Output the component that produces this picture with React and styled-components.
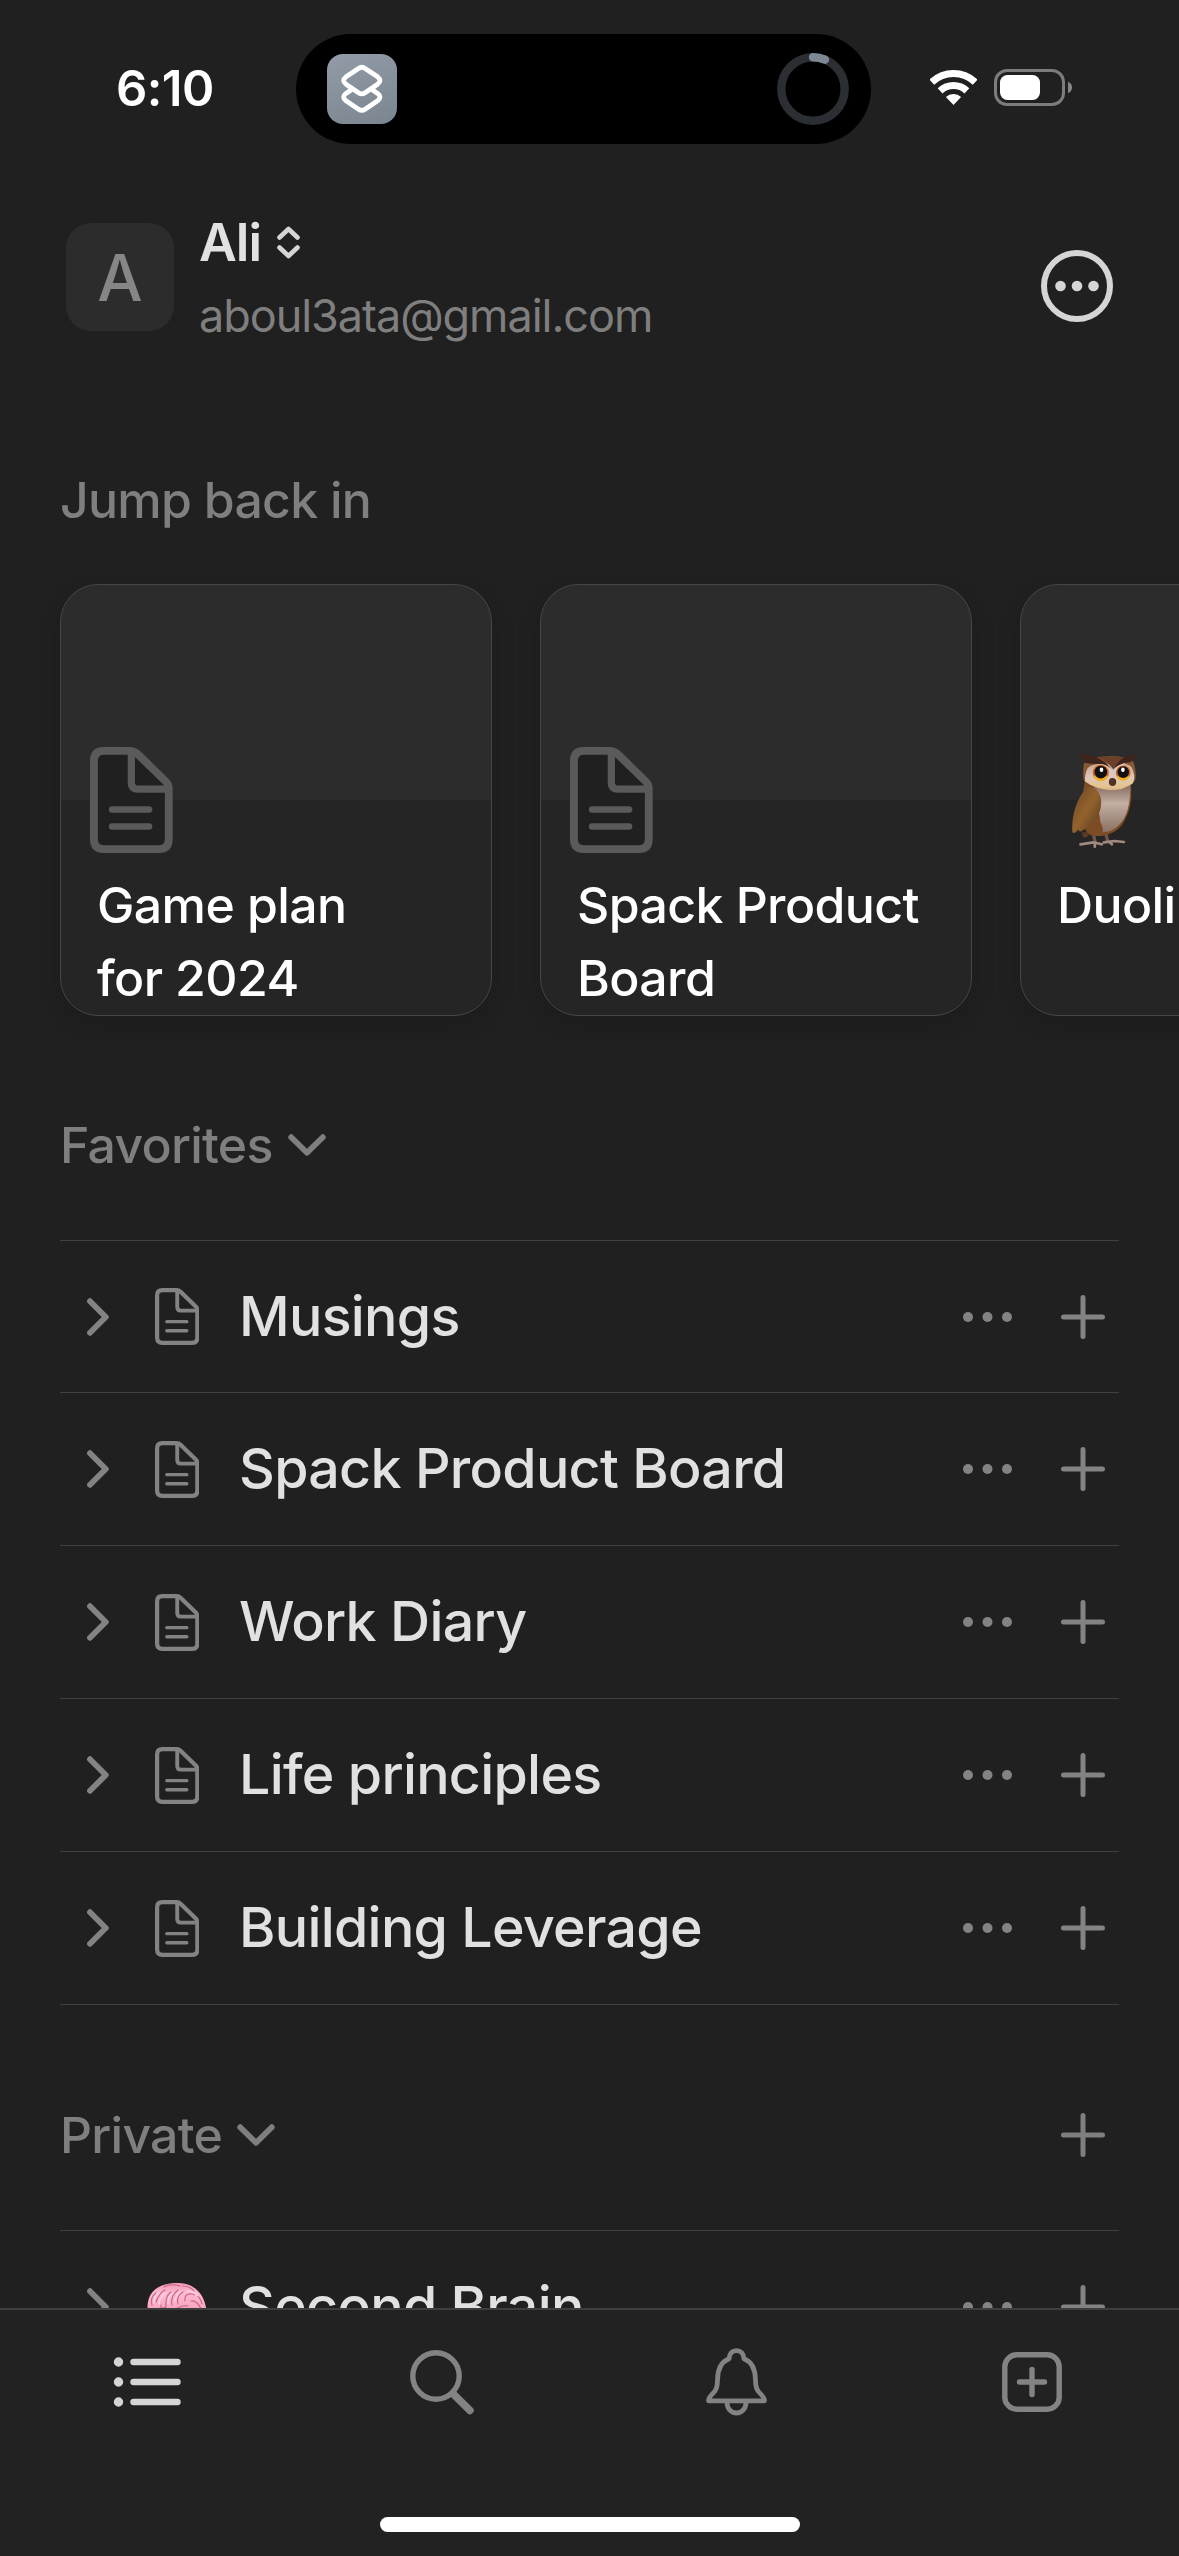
import React from 'react';
import styled, {createGlobalStyle} from 'styled-components';

const GlobalStyle = createGlobalStyle`
    * {
        box-sizing: border-box;
    }

    body {
        margin: 0;
        background: #202020;
        font-family: Inter, "Liberation Sans", sans-serif;
        -webkit-font-smoothing: antialiased;
    }

    svg {
        display: block;
        flex-shrink: 0;
    }

    button {
        display: flex;
        padding: 0;
        border: 0;
        background: none;
        color: inherit;
    }
`;

const Screen = styled.div`
    display: flex;
    flex-direction: column;
    width: 1179px;
    height: 2556px;
    overflow: hidden;
    background: #202020;
    color: #e1e1e1;
`;

const StatusBar = styled.div`
    display: flex;
    flex-shrink: 0;
    height: 144px;
    padding-top: 34px;
    color: #fff;
`;

const Time = styled.div`
    width: 296px;
    padding-left: 116px;
    font-size: 49px;
    font-weight: 600;
    line-height: 109px;
    letter-spacing: -0.6px;
`;

const Island = styled.div`
    display: flex;
    align-items: center;
    justify-content: space-between;
    width: 575px;
    height: 110px;
    padding: 0 22px 0 30.5px;
    border-radius: 55px;
    background: #000;
`;

const AppIcon = styled.div`
    width: 70px;
    height: 70px;
    border-radius: 16px;
    background: linear-gradient(160deg, #929ca8, #7b858f);
`;

const Signals = styled.div`
    display: flex;
    align-items: center;
    gap: 17px;
    height: 107px;
    padding-left: 59px;
`;

const Content = styled.main`
    flex: 1;
    min-height: 0;
    overflow: hidden;
`;

const Header = styled.header`
    display: flex;
    align-items: flex-start;
    height: 326px;
    padding: 79px 66px 0;
`;

const Avatar = styled.div`
    width: 108px;
    height: 108px;
    border-radius: 25px;
    background: #2c2c2c;
    color: #868686;
    font-size: 64px;
    font-weight: 500;
    line-height: 109px;
    text-align: center;
`;

const Account = styled.div`
    flex: 1;
    margin: -11px 0 0 25px;
`;

const Name = styled.div`
    display: flex;
    align-items: center;
    gap: 16px;
    font-size: 52px;
    font-weight: 600;
    line-height: 61px;
    letter-spacing: -1px;
`;

const Email = styled.div`
    margin-top: 16px;
    color: #7f7f7f;
    font-size: 45px;
    line-height: 54px;
    letter-spacing: -1.05px;
`;

const MoreButton = styled.button`
    margin-top: 27px;
    color: #d5d5d5;
`;

const SectionHeader = styled.div`
    display: flex;
    align-items: center;
    justify-content: space-between;
    height: 60px;
    margin: ${props => props.first ? "0 60px 54px" : "100px 60px 65px"};
    padding-right: 14px;
    color: #7f7f7f;
`;

const SectionTitle = styled.h2`
    display: flex;
    align-items: center;
    gap: 15px;
    margin: 0;
    font-size: 50px;
    font-weight: 500;
    line-height: 61px;
    letter-spacing: -0.75px;
`;

const Cards = styled.div`
    display: flex;
    gap: 48px;
    padding-left: 60px;
`;

const Card = styled.div`
    flex-shrink: 0;
    width: 432px;
    height: 432px;
    margin-bottom: -1px;
    border: 1px solid #464646;
    border-radius: 38px;
    background: linear-gradient(#2c2c2c 215px, #252525 215px);
    box-shadow: 0 8px 24px rgba(0, 0, 0, 0.14);
    overflow: hidden;
`;

const CardIcon = styled.div`
    display: flex;
    align-items: center;
    justify-content: ${props => props.emoji ? "center" : "flex-start"};
    width: 108px;
    height: 106px;
    margin: 162px 0 0 29px;
    color: #5a5a5a;
`;

const CardTitle = styled.div`
    width: 370px;
    margin: 16px 0 0 36px;
    color: #fff;
    font-size: 50px;
    font-weight: 500;
    line-height: 73px;
    letter-spacing: -0.6px;
`;

const List = styled.div`
    margin: 0 60px;
    border-top: 1px solid #404040;
`;

const Row = styled.div`
    display: flex;
    align-items: center;
    height: 153px;
    padding: 0 14px 0 27px;
    border-bottom: 1px solid #404040;
    color: #838383;

    &:first-child {
        height: 152px;
    }
`;

const RowIcon = styled.div`
    display: flex;
    justify-content: center;
    width: 60px;
    margin: 0 32px 0 38px;
`;

const RowTitle = styled.div`
    flex: 1;
    padding-bottom: 3px;
    color: #e1e1e1;
    font-size: 55.5px;
    font-weight: 500;
    letter-spacing: -0.7px;
    white-space: nowrap;
`;

const RowActions = styled.div`
    display: flex;
    align-items: center;
    gap: 49px;
`;

const TabBar = styled.nav`
    display: flex;
    flex-direction: column;
    flex-shrink: 0;
    align-items: center;
    height: 248px;
    border-top: 2px solid #3e3e3e;
    background: #222;
`;

const Tabs = styled.div`
    display: grid;
    grid-template-columns: repeat(4, 1fr);
    width: 100%;
    height: 143px;
`;

const Tab = styled.button`
    align-items: center;
    justify-content: center;
    color: ${props => props.active ? "#d5d5d5" : "#838383"};
`;

const HomeIndicator = styled.div`
    width: 420px;
    height: 15px;
    margin-top: 64px;
    border-radius: 8px;
    background: #fff;
`;

const ShortcutsGlyph = () => (
    <svg width="70" height="70" fill="none" stroke="#fff" strokeWidth="4.8" strokeLinecap="round" strokeLinejoin="round">
        <path d="M31.5 14.4Q34.8 12.2 38.1 14.4L50.6 22.8Q55.4 26.5 50.6 30.2L38.1 38.8Q34.8 41 31.5 38.8L19 30.2Q14.2 26.5 19 22.8Z"/>
        <path d="M24 36L19 39.4Q14.2 43.1 19 46.8L31.5 55.2Q34.8 57.4 38.1 55.2L50.6 46.8Q55.4 43.1 50.6 39.4L45.6 36"/>
    </svg>
);

const ProgressRing = () => (
    <svg width="72" height="72" fill="none" strokeWidth="8.4">
        <circle cx="36" cy="36" r="31.7" stroke="#2b2e33"/>
        <path d="M36 4.3A31.7 31.7 0 0 1 48 6.7" stroke="#7d8893" strokeLinecap="round"/>
    </svg>
);

const WifiIcon = () => (
    <svg width="47" height="35" fill="none" stroke="#fff" strokeWidth="7">
        <path d="M1.8 12.2A31.5 31.5 0 0 1 45.2 12.2"/>
        <path d="M10.1 20.9A19.5 19.5 0 0 1 36.9 20.9"/>
        <path d="M23.5 35L15.9 27A11 11 0 0 1 31.1 27Z" fill="#fff" stroke="none"/>
    </svg>
);

const BatteryIcon = () => (
    <svg width="79" height="37">
        <rect x="1.5" y="1.5" width="68" height="34" rx="11.5" fill="none" stroke="#7c7c7c" strokeWidth="3"/>
        <rect x="6" y="6" width="40" height="25" rx="7.5" fill="#fff"/>
        <path d="M74 12.8Q78 14.5 78 18.5T74 24.2Z" fill="#868686"/>
    </svg>
);

const SortIcon = () => (
    <svg width="23" height="33" fill="none" stroke="#d5d5d5" strokeWidth="4.6" strokeLinecap="round" strokeLinejoin="round">
        <path d="M2.5 11.5L11.5 3L20.5 11.5M2.5 21.5L11.5 30L20.5 21.5"/>
    </svg>
);

const CircleMoreIcon = () => (
    <svg width="72" height="72" fill="currentColor">
        <circle cx="36" cy="36" r="33" fill="none" stroke="currentColor" strokeWidth="6"/>
        <circle cx="19.5" cy="36" r="5.3"/>
        <circle cx="36" cy="36" r="5.3"/>
        <circle cx="52.5" cy="36" r="5.3"/>
    </svg>
);

const PageIcon = ({size, fill = "none"}) => (
    <svg width={size * .78} height={size} viewBox="0 0 78 100" fill="none" stroke="currentColor" strokeLinecap="round" strokeLinejoin="round">
        <path d="M13 3.7H37.5Q42 3.7 45.3 7L71.5 32.5Q74.3 35.3 74.3 39.5V87Q74.3 96.3 65 96.3H13Q3.7 96.3 3.7 87V13Q3.7 3.7 13 3.7Z" fill={fill} strokeWidth="7.4"/>
        <path d="M39 5V33.5Q39 39.8 45.3 39.8H73" strokeWidth="6.8"/>
        <path d="M20.8 59H55.8M20.8 75H55.8" strokeWidth="6"/>
    </svg>
);

const ChevronDown = () => (
    <svg width="38" height="22" fill="none" stroke="currentColor" strokeWidth="5.8" strokeLinecap="round" strokeLinejoin="round">
        <path d="M3.2 3.2L19 18.8L34.8 3.2"/>
    </svg>
);

const ChevronRight = () => (
    <svg width="22" height="38" fill="none" stroke="currentColor" strokeWidth="5.8" strokeLinecap="round" strokeLinejoin="round">
        <path d="M3 3.2L18.8 19L3 34.8"/>
    </svg>
);

const DotsIcon = () => (
    <svg width="49" height="10" fill="currentColor">
        <circle cx="5" cy="5" r="5"/>
        <circle cx="24.5" cy="5" r="5"/>
        <circle cx="44" cy="5" r="5"/>
    </svg>
);

const PlusIcon = () => (
    <svg width="44" height="44" fill="none" stroke="currentColor" strokeWidth="5" strokeLinecap="round">
        <path d="M22 2.5V41.5M2.5 22H41.5"/>
    </svg>
);

const ListIcon = () => (
    <svg width="68" height="50" fill="none" stroke="currentColor" strokeLinecap="round">
        <path d="M20.5 5H64.5M20.5 25H64.5M20.5 45H64.5" strokeWidth="6.4"/>
        <path d="M5.5 5H5.51M5.5 25H5.51M5.5 45H5.51" strokeWidth="9.4"/>
    </svg>
);

const SearchIcon = () => (
    <svg width="64" height="66" fill="none" stroke="currentColor" strokeLinecap="round">
        <circle cx="26" cy="27" r="23.2" strokeWidth="5.4"/>
        <path d="M43.8 45.5L60 61.5" strokeWidth="7.4"/>
    </svg>
);

const BellIcon = () => (
    <svg width="61" height="68" fill="none" stroke="currentColor" strokeWidth="4.8" strokeLinejoin="round">
        <path d="M23 10.8C23.4 5.5 26.3 2.6 30.5 2.6S37.6 5.5 38 10.8C46 14 49.2 22 49.4 31C49.6 39 50.6 42 54.3 45.6C57.2 48.5 58.6 50.4 58.4 52.8H2.6C2.4 50.4 3.8 48.5 6.7 45.6C10.4 42 11.4 39 11.6 31C11.8 22 15 14 23 10.8Z"/>
        <path d="M20.9 54C21.3 61 25.2 65 30.5 65S39.7 61 40.1 54"/>
    </svg>
);

const AddBoxIcon = () => (
    <svg width="60" height="60" fill="none" stroke="currentColor" strokeLinecap="round">
        <rect x="2.8" y="2.8" width="54.4" height="54.4" rx="12" strokeWidth="5.4"/>
        <path d="M30 17.5V42.5M17.5 30H42.5" strokeWidth="5.4"/>
    </svg>
);

const OwlEmoji = () => (
    <svg width="67" height="97" viewBox="92 154 200 290">
        <defs>
            <linearGradient id="owlWing" x1="0" y1="0" x2="1" y2="1">
                <stop offset="0" stopColor="#6d4528"/>
                <stop offset=".5" stopColor="#93632c"/>
                <stop offset="1" stopColor="#53351f"/>
            </linearGradient>
            <linearGradient id="owlBelly" x1="0" y1="0" x2="0" y2="1">
                <stop offset="0" stopColor="#83695b"/>
                <stop offset=".4" stopColor="#c2aea3"/>
                <stop offset="1" stopColor="#8a7263"/>
            </linearGradient>
            <linearGradient id="owlFace" x1="0" y1="0" x2="0" y2="1">
                <stop offset="0" stopColor="#c9ab97"/>
                <stop offset=".55" stopColor="#dcc8bb"/>
                <stop offset=".85" stopColor="#e6c48c"/>
                <stop offset="1" stopColor="#d8b48a"/>
            </linearGradient>
        </defs>
        <path d="M158 395L164 424M195 395L202 422" stroke="#6f5546" strokeWidth="10"/>
        <path d="M120 430L158 424L184 430M163 426V437M190 424L222 420L250 423M206 422L214 430" fill="none" stroke="#a18b80" strokeWidth="8" strokeLinecap="round"/>
        <path d="M126 394Q122 408 134 410Q146 408 146 394Z" fill="#5b3829"/>
        <path d="M134 235C122 300 118 390 150 402C180 412 222 400 244 372C268 340 274 290 270 240Z" fill="#7d4b24"/>
        <path d="M255 260L272 265Q274 320 254 350Z" fill="#8c521f"/>
        <path d="M158 250L270 250C268 310 262 348 234 374Q215 394 186 394C192 378 178 372 178 350Z" fill="url(#owlBelly)"/>
        <path d="M142 258C118 280 92 330 96 395Q106 400 113 386Q116 396 128 388C155 374 184 345 182 300C180 272 164 258 142 258Z" fill="url(#owlWing)"/>
        <path d="M131 186Q150 168 205 167Q258 166 279 184Q288 214 284 238Q270 264 216 268Q156 266 130 240Q126 214 131 186Z" fill="#875834"/>
        <path d="M142 202Q160 184 216 190Q256 184 272 198Q288 226 276 248Q248 268 214 268Q166 266 134 242Q132 220 142 202Z" fill="url(#owlFace)"/>
        <path d="M172 170Q214 165 262 172Q236 184 219 206Q200 182 172 170Z" fill="#6d4029"/>
        <path d="M142 174Q192 180 217 210Q238 178 284 168Q244 186 230 222L216 240L204 222Q192 192 142 174Z" fill="#dac9c2"/>
        <path d="M115 159Q182 162 211 204Q198 190 178 190Q150 190 130 186L136 179Q120 176 126 171Q116 168 115 159ZM288 163Q242 160 222 202Q246 184 272 185Q270 180 278 174Z" fill="#3f241c"/>
        <circle cx="181" cy="216" r="24" fill="#d5641b"/>
        <path d="M160 226A22 22 0 0 0 202 226Z" fill="#f3ae20"/>
        <circle cx="181" cy="214" r="19" fill="#111"/>
        <circle cx="248" cy="216" r="22" fill="#d5641b"/>
        <path d="M229 226A20 20 0 0 0 267 226Z" fill="#f3ae20"/>
        <circle cx="248" cy="214" r="17.5" fill="#111"/>
        <ellipse cx="183" cy="207" rx="5.5" ry="6.5" fill="#fff"/>
        <ellipse cx="247" cy="207" rx="5.5" ry="6.5" fill="#fff"/>
        <ellipse cx="216" cy="244" rx="11" ry="12" fill="#513128"/>
    </svg>
);

const BrainEmoji = () => (
    <svg width="60" height="50" viewBox="0 0 60 50">
        <defs>
            <linearGradient id="brain" x1="0" y1="0" x2="0" y2="1">
                <stop offset="0" stopColor="#ee9ab3"/>
                <stop offset=".25" stopColor="#ffb9cf"/>
                <stop offset="1" stopColor="#ee8fae"/>
            </linearGradient>
        </defs>
        <path d="M.5 28C0 18 3 11 10 6C19 0 38 -1 46 5C54 10 58 18 59.5 28C60 40 42 46 32 42C18 46 2 40 .5 28Z" fill="url(#brain)"/>
        <path d="M5 23Q3 15 9 11M9 20Q12 11 18 8M14 23Q13 28 19 25Q18 14 24 10M25 23Q23 14 31 8M17 5Q24 1 33 4M31 22Q29 14 36 10M36 4Q43 4 47 9M38 19Q37 11 45 12Q53 13 55 22M44 19Q50 18 54 27M29 27Q34 23 41 24" fill="none" stroke="#c4648a" strokeWidth="1.1" strokeLinecap="round"/>
        <path d="M7 21Q7 14 12 11M12 22Q13 14 19 11M21 22Q21 14 26 11M28 19Q29 13 33 10M40 9Q47 9 50 14" fill="none" stroke="#ffd3e0" strokeWidth="1.5" strokeLinecap="round"/>
    </svg>
);

const recents = [
    {title: <>Game plan<br/>for 2024</>},
    {title: <>Spack Product<br/>Board</>},
    {title: "Duolingo", emoji: <OwlEmoji/>},
];

const favorites = ["Musings", "Spack Product Board", "Work Diary", "Life principles", "Building Leverage"];

const PageRow = ({title, emoji}) => (
    <Row>
        <button><ChevronRight/></button>
        <RowIcon>{emoji || <PageIcon size={57}/>}</RowIcon>
        <RowTitle>{title}</RowTitle>
        <RowActions>
            <button><DotsIcon/></button>
            <button><PlusIcon/></button>
        </RowActions>
    </Row>
);

export default () => {
    return (
        <Screen>
            <GlobalStyle/>
            <StatusBar>
                <Time>6:10</Time>
                <Island>
                    <AppIcon><ShortcutsGlyph/></AppIcon>
                    <ProgressRing/>
                </Island>
                <Signals>
                    <WifiIcon/>
                    <BatteryIcon/>
                </Signals>
            </StatusBar>

            <Content>
                <Header>
                    <Avatar>A</Avatar>
                    <Account>
                        <Name>Ali <SortIcon/></Name>
                        <Email>aboul3ata@gmail.com</Email>
                    </Account>
                    <MoreButton><CircleMoreIcon/></MoreButton>
                </Header>

                <SectionHeader first>
                    <SectionTitle>Jump back in</SectionTitle>
                </SectionHeader>
                <Cards>
                    {recents.map((page, i) => (
                        <Card key={i}>
                            <CardIcon emoji={page.emoji}>
                                {page.emoji || <PageIcon size={106} fill="#202020"/>}
                            </CardIcon>
                            <CardTitle>{page.title}</CardTitle>
                        </Card>
                    ))}
                </Cards>

                <SectionHeader>
                    <SectionTitle>Favorites <ChevronDown/></SectionTitle>
                </SectionHeader>
                <List>
                    {favorites.map(title => <PageRow key={title} title={title}/>)}
                </List>

                <SectionHeader>
                    <SectionTitle>Private <ChevronDown/></SectionTitle>
                    <button><PlusIcon/></button>
                </SectionHeader>
                <List>
                    <PageRow title="Second Brain" emoji={<BrainEmoji/>}/>
                </List>
            </Content>

            <TabBar>
                <Tabs>
                    <Tab active><ListIcon/></Tab>
                    <Tab><SearchIcon/></Tab>
                    <Tab><BellIcon/></Tab>
                    <Tab><AddBoxIcon/></Tab>
                </Tabs>
                <HomeIndicator/>
            </TabBar>
        </Screen>
    )
}
